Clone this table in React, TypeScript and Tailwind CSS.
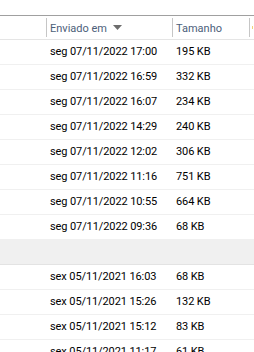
const rows1 = [
  ["seg 07/11/2022 17:00", "195 KB"],
  ["seg 07/11/2022 16:59", "332 KB"],
  ["seg 07/11/2022 16:07", "234 KB"],
  ["seg 07/11/2022 14:29", "240 KB"],
  ["seg 07/11/2022 12:02", "306 KB"],
  ["seg 07/11/2022 11:16", "751 KB"],
  ["seg 07/11/2022 10:55", "664 KB"],
  ["seg 07/11/2022 09:36", "68 KB"],
];

const rows2 = [
  ["sex 05/11/2021 16:03", "68 KB"],
  ["sex 05/11/2021 15:26", "132 KB"],
  ["sex 05/11/2021 15:12", "83 KB"],
  ["sex 05/11/2021 11:17", "61 KB"],
];

function Row({ date, size }: { date: string; size: string }) {
  return (
    <div className="flex h-[25px] shrink-0 items-center border-b border-[#f0f0f0] pt-[1px] text-[11px] tracking-[-0.1px] text-black">
      <div className="w-[50px] shrink-0" />
      <div className="w-[126px] shrink-0 whitespace-nowrap">{date}</div>
      <div className="whitespace-nowrap">{size}</div>
    </div>
  );
}

export default function App() {
  return (
    <div
      className="flex h-[352px] w-[254px] flex-col overflow-hidden bg-white"
      style={{ fontFamily: 'Roboto, "Noto Sans", sans-serif' }}
    >
      <div className="h-[15px] shrink-0" />

      {/* column headers */}
      <div className="flex h-[25px] shrink-0 items-stretch border-t border-b border-t-[#a0a0a0] border-b-[#e5e5e5] text-[11px] text-[#4c607a]">
        <div className="w-[46px] shrink-0" />
        <div className="my-[2px] w-px shrink-0 bg-[#c6c6c6]" />
        <div className="flex w-[125px] shrink-0 items-center pl-[3px] pt-[3px]">
          <span>Enviado em</span>
          <svg width="9" height="5" viewBox="0 0 9 5" className="ml-[6px] mb-[3px]">
            <path d="M0 0 H9 L4.5 5 Z" fill="#6d6d6d" />
          </svg>
        </div>
        <div className="my-[2px] w-px shrink-0 bg-[#c6c6c6]" />
        <div className="flex w-[76px] shrink-0 items-center pl-[3px] pt-[3px]">
          Tamanho
        </div>
        <div className="my-[2px] w-px shrink-0 bg-[#c6c6c6]" />
        <div className="flex items-center pl-[2px]">
          <div className="h-[3px] w-px bg-[#f2d27a]" />
        </div>
      </div>

      {rows1.map(([d, s]) => (
        <Row key={d} date={d} size={s} />
      ))}

      {/* group separator */}
      <div className="h-[25px] shrink-0 border-b border-[#e3e3e3] bg-[#f0f0f0]" />

      {rows2.map(([d, s]) => (
        <Row key={d} date={d} size={s} />
      ))}
    </div>
  );
}
